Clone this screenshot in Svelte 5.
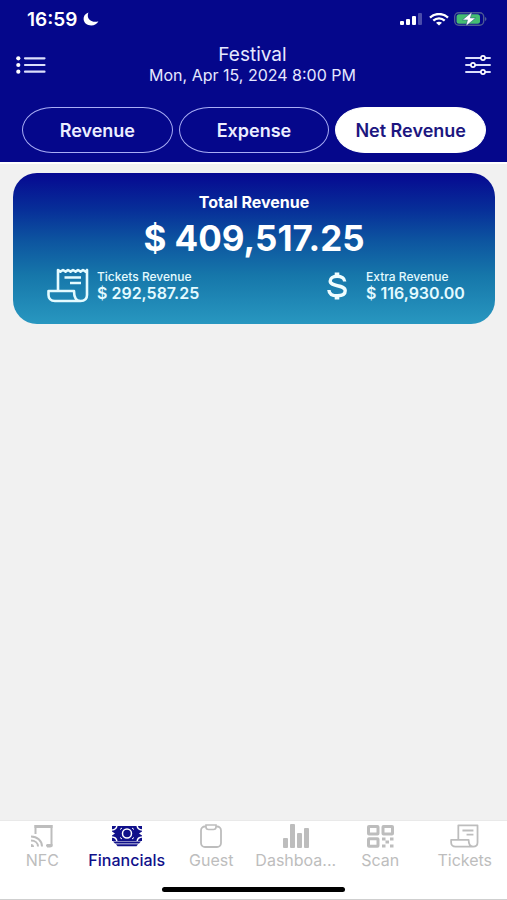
<script>
  let activeTab = $state('Net Revenue');
  const tabs = ['Revenue', 'Expense', 'Net Revenue'];
  const nav = ['NFC', 'Financials', 'Guest', 'Dashboa...', 'Scan', 'Tickets'];
  let activeNav = $state('Financials');
</script>

<div class="app">
  <header>
    <div class="status">
      <div class="clock">
        <span>16:59</span>
        <svg width="16" height="14" viewBox="0 0 16 14" aria-hidden="true">
          <path fill="#fff" d="M5.500.6C1.800 2 .4 4.500.6 7.200.9 11 4.200 13.400 8.200 13.400c3.300 0 6-1.500 7.200-4.200-1.200.5-2.300.7-3.500.6C8 9.600 5 7 4.800 3.900 4.700 2.700 5 1.600 5.500.6z" />
        </svg>
      </div>
      <div class="signals">
        <svg width="24" height="13" viewBox="0 0 24 13" fill="#fff" aria-hidden="true">
          <rect x="0" y="8" width="4" height="4" rx="1" />
          <rect x="6" y="6" width="4" height="6" rx="1" />
          <rect x="12" y="3" width="4" height="9" rx="1" />
          <rect x="18" y="0" width="4" height="12" rx="1" opacity=".28" />
        </svg>
        <svg width="20" height="13" viewBox="0 0 20 13" aria-hidden="true">
          <g fill="none" stroke="#fff" stroke-width="2.300">
            <path d="M1 4.600C6-.2 14-.2 19 4.600" />
            <path d="M4.300 7.700c3.300-3 8.100-3 11.400 0" />
          </g>
          <path fill="#fff" d="M7 9.700c1.800-1.400 4.200-1.400 6 0L10 12.500z" />
        </svg>
        <svg width="33" height="14" viewBox="0 0 33 14" aria-hidden="true">
          <rect x=".7" y=".7" width="29" height="12.600" rx="4" fill="none" stroke="#4d5b93" stroke-width="1.400" />
          <rect x="2.500" y="2.200" width="23.500" height="9.600" rx="2.500" fill="#45bd72" />
          <path d="M31 5v4c2-.8 2-3.200 0-4z" fill="#4d5b93" />
          <path d="M18 0 8.500 7.900h5L12 14l9.500-8h-5.200z" fill="#fff" stroke="#163378" stroke-width=".4" />
        </svg>
      </div>
    </div>

    <div class="titlebar">
      <button class="icon" aria-label="Menu">
        <svg width="30" height="18" viewBox="0 0 30 18" aria-hidden="true">
          <g fill="#fff"><circle cx="2.300" cy="2.300" r="2.100" /><circle cx="2.300" cy="9" r="2.100" /><circle cx="2.300" cy="15.700" r="2.100" /></g>
          <path d="M9 2.300h19.500M9 9h19.500M9 15.700h19.500" stroke="#dcdffb" stroke-width="2.200" stroke-linecap="round" />
        </svg>
      </button>
      <div class="event">
        <h1>Festival</h1>
        <p>Mon, Apr 15, 2024 8:00 PM</p>
      </div>
      <button class="icon" aria-label="Filters">
        <svg width="26" height="20" viewBox="0 0 26 20" aria-hidden="true">
          <path d="M1 3h24M1 10h24M1 17h24" stroke="#dcdffb" stroke-width="1.900" stroke-linecap="round" />
          <g fill="#05078b" stroke="#fff" stroke-width="1.600"><circle cx="18" cy="3" r="2.100" /><circle cx="8" cy="10" r="2.100" /><circle cx="18" cy="17" r="2.100" /></g>
        </svg>
      </button>
    </div>

    <div class="tabs">
      {#each tabs as tab}
        <button class:active={activeTab === tab} aria-pressed={activeTab === tab} onclick={() => (activeTab = tab)}>{tab}</button>
      {/each}
    </div>
  </header>

  <main>
    <section class="card">
      <h2>Total Revenue</h2>
      <p class="total">$ 409,517.25</p>
      <div class="split">
        <div class="part">
          <svg width="42" height="35" viewBox="0 0 42 35" fill="none" stroke="#e4fbff" stroke-width="2.600" stroke-linejoin="round" aria-hidden="true">
            <path d="M11 22V2l2.400 1.600L16 2l2.600 1.600L21 2l2.600 1.600L26 2l2.600 1.600L31 2l2.600 1.600L36 2l2.600 1.600L40 2v25c0 4-2.500 6-6.500 6H8c-4.500 0-6.500-3-6.500-6v-4H27c0 6 1.500 10 6.500 10M17.500 9.500H34M23 15h11" />
          </svg>
          <div class="figures"><h3>Tickets Revenue</h3><p>$ 292,587.25</p></div>
        </div>
        <div class="part extra">
          <svg width="20" height="28" viewBox="0 0 20 28" fill="none" stroke="#effdff" aria-hidden="true">
            <path d="M10 .5V5M10 23v4.500" stroke-width="4.600" />
            <path d="M17.700 9.500C17.500 6.300 14.500 4.300 10.200 4.300c-4.300 0-7 1.900-7 4.800 0 6.200 15 3 15 9.700 0 3.100-3 5-7.800 5-5.200 0-8.300-2.200-8.500-5.800" stroke-width="3.400" />
          </svg>
          <div class="figures"><h3>Extra Revenue</h3><p>$ 116,930.00</p></div>
        </div>
      </div>
    </section>
  </main>

  <footer>
    <nav>
      {#each nav as item, i}
        <button class:current={activeNav === item} onclick={() => (activeNav = item)}>
          {#if i === 0}
            <svg width="24" height="24" viewBox="0 0 24 24" fill="none" stroke="currentColor" aria-hidden="true">
              <path d="M5.500 10V2H21.500v19.500H16" stroke-width="2" /><path d="M4.500 2.500h18" stroke-width="3" />
              <path d="M1 12.500c6 0 11 4 11 10M1 16.500c4 0 7 2.500 7 6" stroke-width="2" /><path d="M1 20c2 0 3 1 3 3H1z" fill="currentColor" stroke="none" />
              <path d="M17 20h5.500v1.500c0 1-1 2-2.500 2h-3z" fill="currentColor" stroke="none" />
            </svg>
          {:else if i === 1}
            <svg width="30" height="24" viewBox="0 0 30 24" aria-hidden="true">
              <path d="M0 2h30v15H0zM1 17.600h28l-2 2H3zM4 20.200h22l-1.500 2h-19z" fill="currentColor" />
              <g fill="none" stroke="#fff" stroke-width="1.500">
                <circle cx="15" cy="9.500" r="4.500" />
                <path d="M0 6C3 5.800 4.500 4.500 4.800 2M30 6C27 5.800 25.500 4.500 25.200 2M0 13c3 .2 4.500 1.500 4.800 4M30 13c-3 .2-4.500 1.500-4.800 4" />
                <path d="M10 4 8 5.500M20 4l2 1.500M10 15l-2-1.500M20 15l2-1.500" stroke-width="1" />
              </g>
              <path d="M0 7.500 3 9.500 0 11.500zM30 7.500l-3 2 3 2z" fill="#fff" />
            </svg>
          {:else if i === 2}
            <svg width="24" height="24" viewBox="0 0 24 24" fill="none" stroke="currentColor" aria-hidden="true">
              <rect x="2" y="2.500" width="20" height="20.500" rx="4" stroke-width="1.800" />
              <path d="M7 1h10v2c0 2-1 2.500-2.500 2.500h-5C8 5.500 7 5 7 3z" fill="#fff" stroke-width="1.600" />
            </svg>
          {:else if i === 3}
            <svg width="26" height="24" viewBox="0 0 26 24" fill="currentColor" aria-hidden="true">
              <rect x="0" y="14" width="5" height="10" rx="1" /><rect x="7" y="0" width="5" height="24" rx="1" /><rect x="14" y="9" width="5" height="15" rx="1" /><rect x="21" y="4" width="5" height="20" rx="1" />
            </svg>
          {:else if i === 4}
            <svg width="27" height="24" viewBox="0 0 27 24" fill="none" stroke="currentColor" aria-hidden="true">
              <g stroke-width="3"><rect x="1.500" y="2.500" width="9.500" height="7.400" rx=".5" /><rect x="16" y="2.500" width="9.500" height="7.400" rx=".5" /><rect x="1.500" y="14.800" width="9.500" height="7.400" rx=".5" /></g>
              <path d="M15 13.500h3.500v3H15zM18.500 16.500h3.500v3h-3.500zM23 13.500h3.500v3H23zM15 20.500h3.500v3H15zM23 20.500h3.500v3H23z" fill="currentColor" stroke="none" />
            </svg>
          {:else}
            <svg width="29" height="24" viewBox="0 0 42 35" fill="none" stroke="currentColor" stroke-width="2.600" stroke-linejoin="round" aria-hidden="true">
              <path d="M12 22V2h28v25c0 4-2.500 6-6.500 6H8c-4.500 0-6.500-3-6.500-6v-4H27c0 6 1.500 10 6.500 10M18 9.500h16M24 15.500h10" />
            </svg>
          {/if}
          <span>{item}</span>
        </button>
      {/each}
    </nav>
    <div class="home"></div>
  </footer>
</div>

<style>
  :global(body) { margin: 0; }
  .app {
    min-height: 100vh;
    display: flex;
    flex-direction: column;
    background: #f1f1f1;
    font-family: Inter, "Liberation Sans", sans-serif;
    color: #fff;
  }
  h1, h2, h3, p { margin: 0; }
  button { font: inherit; cursor: pointer; }
  svg { display: block; flex: none; }
  header {
    background: #05078b;
    padding-bottom: 9px;
    border-bottom: 2px solid #fff;
  }
  .status {
    display: flex;
    justify-content: space-between;
    align-items: center;
    height: 38px;
    padding: 0 20px 0 27px;
  }
  .clock { display: flex; align-items: center; gap: 6px; font-size: 19px; font-weight: 600; }
  .signals { display: flex; align-items: center; gap: 5px; }
  .titlebar {
    display: flex;
    align-items: center;
    justify-content: space-between;
    height: 54px;
    padding: 0 16px;
  }
  .icon { padding: 0; border: 0; background: none; }
  .event { text-align: center; padding-right: 6px; }
  .event h1 { font-size: 19px; line-height: 20px; font-weight: 400; color: #e6e8ff; }
  .event p { font-size: 16px; line-height: 20px; color: #e6e8ff; }
  .tabs {
    display: grid;
    grid-template-columns: repeat(3, 1fr);
    gap: 6px;
    padding: 15px 21px 0 22px;
  }
  .tabs button {
    height: 46px;
    padding: 0;
    border: 1px solid #a9aef5;
    border-radius: 30px / 23px;
    background: transparent;
    color: #eceeff;
    font-size: 18px;
    font-weight: 600;
  }
  .tabs .active { background: #fff; border-color: #fff; color: #1c1680; }
  main { flex: 1; padding: 9px 12px 0 13px; }
  .card {
    padding: 19px 25px 21px 34px;
    border-radius: 24px;
    background: linear-gradient(#060891 0%, #073099 25%, #0d55a0 45%, #1677aa 68%, #2897c0 100%);
  }
  h2 { padding-right: 9px; text-align: center; font-size: 16px; line-height: 20px; font-weight: 700; }
  .total { padding-right: 9px; text-align: center; font-size: 35px; line-height: 52px; font-weight: 700; }
  .split { display: flex; justify-content: space-between; align-items: center; padding-top: 4px; }
  .part { display: flex; align-items: center; gap: 8px; color: #e4faff; }
  .extra { gap: 19px; }
  .figures { min-width: 104px; }
  h3 { font-size: 12px; line-height: 15px; font-weight: 500; }
  .part p { font-size: 16px; line-height: 18px; font-weight: 600; }
  footer { background: #fff; border-top: 1px solid #e9e9e9; border-bottom: 1px solid #cfcfcf; }
  nav { display: grid; grid-template-columns: repeat(6, 1fr); padding-top: 3px; }
  nav button {
    display: flex;
    flex-direction: column;
    align-items: center;
    gap: 2px;
    min-width: 0;
    padding: 0;
    border: 0;
    background: none;
    color: #bdbdbd;
    font-size: 16px;
    line-height: 20px;
  }
  nav .current { color: #10108a; font-weight: 500; }
  .home { width: 36%; height: 5px; margin: 17px auto 7px; border-radius: 3px; background: #000; }
</style>
